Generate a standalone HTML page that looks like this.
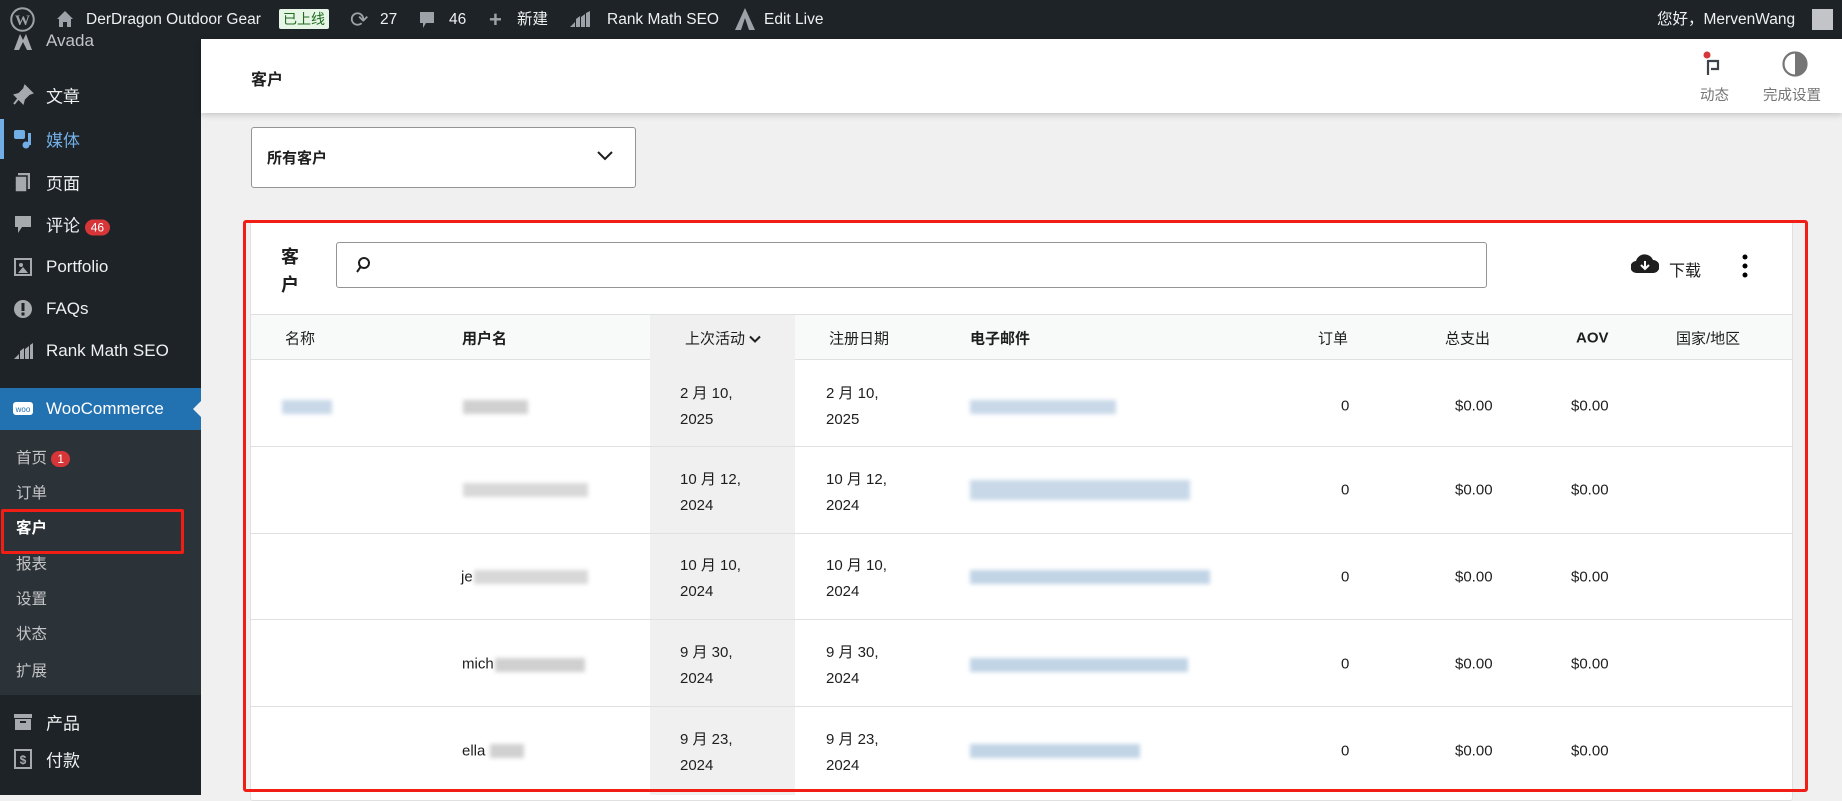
<!DOCTYPE html>
<html><head><meta charset="utf-8"><style>
*{box-sizing:border-box;margin:0;padding:0}
body{width:1842px;height:795px;overflow:hidden;background:#f0f0f1;font-family:"Liberation Sans","Noto Sans CJK SC",sans-serif;position:relative;color:#1e1e1e}
.a{position:absolute;white-space:nowrap}
#bar{left:0;top:0;width:1842px;height:39px;background:#1d2327;color:#f0f0f1;font-size:15.5px}
#bar span{line-height:39px;top:0}
#side{left:0;top:39px;width:201px;height:756px;background:#1d2327;color:#f0f0f1}
.mi{position:absolute;left:46px;font-size:17px;transform:translateY(-50%)}
.ic{position:absolute;left:12px;width:22px;height:22px;transform:translateY(-50%)}
.si{position:absolute;left:16px;font-size:15.5px;color:#c3c4c7;transform:translateY(-50%)}
.blur{position:absolute;height:14px;filter:blur(2px);transform:translateY(-50%)}
.th{position:absolute;top:338px;font-size:15px;transform:translateY(-50%);color:#1e1e1e}
.td{position:absolute;font-size:15px;transform:translateY(-50%);color:#1e1e1e}
.dt{position:absolute;font-size:15px;line-height:26px;color:#1e1e1e}
.hl{position:absolute;left:251px;width:1541px;height:1px;background:#e0e0e0}
</style></head><body>
<div id="bar" class="a">
 <svg class="a" style="left:10px;top:7px" width="25" height="25" viewBox="0 0 20 20"><circle cx="10" cy="10" r="9" fill="none" stroke="#9ca2a7" stroke-width="1.6"/><text x="10" y="14.5" font-size="12" font-family="Liberation Serif" font-weight="bold" text-anchor="middle" fill="#9ca2a7">W</text></svg>
 <svg class="a" style="left:56px;top:10px" width="18" height="18" viewBox="0 0 18 18"><path d="M9 1 L1 9 H3 V17 H7 V12 H11 V17 H15 V9 H17 Z" fill="#9ca2a7"/></svg>
 <span class="a" style="left:86px">DerDragon Outdoor Gear</span>
 <span class="a" style="left:279px;top:9px!important;line-height:20px!important;background:#e7f5e7;color:#1e6b1e;padding:0 4px;font-size:14px;border-radius:2px">已上线</span>
 <span class="a" style="left:350px;color:#9ca2a7;font-size:22px">⟳</span>
 <span class="a" style="left:380px">27</span>
 <svg class="a" style="left:418px;top:10px" width="18" height="20" viewBox="0 0 18 20"><path d="M2 2H16V13H8L5 18V13H2Z" fill="#9ca2a7"/></svg>
 <span class="a" style="left:449px">46</span>
 <span class="a" style="left:489px;color:#9ca2a7;font-size:22px;font-weight:bold">+</span>
 <span class="a" style="left:517px">新建</span>
 <svg class="a" style="left:569px;top:11px" width="22" height="18" viewBox="0 0 22 18"><path d="M1 16L6 11V16ZM7 16V8L11 5V16ZM12 16V6L16 3V16ZM17 16V2L21 0V16Z" fill="#9ca2a7"/></svg>
 <span class="a" style="left:607px">Rank Math SEO</span>
 <svg class="a" style="left:735px;top:8px" width="20" height="22" viewBox="0 0 20 22"><path d="M10 0L0 22H6L10 10L14 22H20Z" fill="#9ca2a7"/></svg>
 <span class="a" style="left:764px">Edit Live</span>
 <span class="a" style="left:1657px">您好，MervenWang</span>
 <div class="a" style="left:1812px;top:9px;width:21px;height:21px;background:#c3c4c7"></div>
</div>
<div id="side" class="a">
 <svg class="ic" style="top:2px" viewBox="0 0 22 22"><path d="M2 20L8 4L11 10L14 4L20 20H15L11 12L7 20Z" fill="#a7aaad"/></svg><span class="mi" style="top:2px;color:#c3c4c7">Avada</span>
 <svg class="ic" style="top:56px" viewBox="0 0 22 22"><path d="M13 2L20 9L17 10L12 15L11 19L3 11L7 10L12 5Z M6 15L2 20" fill="#a7aaad" stroke="#a7aaad" stroke-width="2"/></svg><span class="mi" style="top:56px">文章</span>
 <div class="a" style="left:0;top:80px;width:4px;height:40px;background:#72aee6"></div>
 <svg class="ic" style="top:100px" viewBox="0 0 22 22"><rect x="2" y="2" width="11" height="9" rx="2" fill="#72aee6"/><circle cx="14" cy="17" r="3.5" fill="#72aee6"/><rect x="16" y="5" width="3" height="12" fill="#72aee6"/></svg><span class="mi" style="top:100px;color:#72aee6">媒体</span>
 <svg class="ic" style="top:143px" viewBox="0 0 22 22"><rect x="6" y="2" width="12" height="16" fill="#a7aaad"/><rect x="3" y="5" width="12" height="16" fill="#a7aaad" stroke="#1d2327" stroke-width="1.5"/></svg><span class="mi" style="top:143px">页面</span>
 <svg class="ic" style="top:185px" viewBox="0 0 22 22"><path d="M3 3H19V14H10L6 20V14H3Z" fill="#a7aaad"/></svg><span class="mi" style="top:185px">评论 <span style="background:#d63638;color:#fff;font-size:12px;border-radius:9px;padding:1px 6px">46</span></span>
 <svg class="ic" style="top:228px" viewBox="0 0 22 22"><rect x="3" y="3" width="16" height="16" fill="none" stroke="#a7aaad" stroke-width="2"/><circle cx="9" cy="9" r="2" fill="#a7aaad"/><path d="M6 17L11 11L16 17Z" fill="#a7aaad"/></svg><span class="mi" style="top:228px">Portfolio</span>
 <svg class="ic" style="top:270px" viewBox="0 0 22 22"><circle cx="11" cy="11" r="9" fill="#a7aaad"/><rect x="9.5" y="5" width="3" height="8" fill="#1d2327"/><rect x="9.5" y="14.5" width="3" height="3" fill="#1d2327"/></svg><span class="mi" style="top:270px">FAQs</span>
 <svg class="ic" style="top:312px" viewBox="0 0 22 22"><path d="M2 19L7 14V19ZM8 19V11L12 8V19ZM13 19V9L17 6V19ZM18 19V5L21 3V19Z" fill="#a7aaad"/></svg><span class="mi" style="top:312px">Rank Math SEO</span>
 <div class="a" style="left:0;top:349px;width:201px;height:42px;background:#2271b1"></div>
 <svg class="ic" style="top:370px" viewBox="0 0 22 22"><rect x="1" y="4" width="20" height="13" rx="3" fill="#fff"/><text x="11" y="14" font-size="8" text-anchor="middle" fill="#2271b1" font-family="Liberation Sans">woo</text></svg><span class="mi" style="top:370px;color:#fff">WooCommerce</span>
 <div class="a" style="left:193px;top:362px;width:0;height:0;border-top:8px solid transparent;border-bottom:8px solid transparent;border-right:8px solid #f0f0f1"></div>
 <div class="a" style="left:0;top:391px;width:201px;height:265px;background:#2c3338"></div>
 <span class="si" style="top:418px">首页 <span style="background:#d63638;color:#fff;font-size:12px;border-radius:9px;padding:1px 6px">1</span></span>
 <span class="si" style="top:453px">订单</span>
 <span class="si" style="top:488px;color:#fff;font-weight:bold">客户</span>
 <div class="a" style="left:1px;top:470px;width:183px;height:45px;border:3px solid #f01e14;border-radius:2px"></div>
 <span class="si" style="top:524px">报表</span>
 <span class="si" style="top:559px">设置</span>
 <span class="si" style="top:594px">状态</span>
 <span class="si" style="top:631px">扩展</span>
 <svg class="ic" style="top:683px" viewBox="0 0 22 22"><rect x="2" y="3" width="18" height="4" fill="#a7aaad"/><rect x="3" y="8" width="16" height="11" fill="#a7aaad"/><rect x="8" y="10" width="6" height="2" fill="#1d2327"/></svg><span class="mi" style="top:683px">产品</span>
 <svg class="ic" style="top:720px" viewBox="0 0 22 22"><rect x="3" y="2" width="16" height="18" fill="none" stroke="#a7aaad" stroke-width="2"/><text x="11" y="16" font-size="12" font-weight="bold" text-anchor="middle" fill="#a7aaad" font-family="Liberation Sans">$</text></svg><span class="mi" style="top:720px">付款</span>
</div>
<div class="a" style="left:201px;top:39px;width:1641px;height:74px;background:#fff;box-shadow:0 2px 6px rgba(0,0,0,.18)"></div>
<span class="a" style="left:251px;top:66px;font-size:16px;font-weight:bold">客户</span>
<svg class="a" style="left:1703px;top:51px" width="22" height="26" viewBox="0 0 22 26"><circle cx="4" cy="4" r="3.5" fill="#d63638"/><path d="M5 9V24M5 10H15V18H8" fill="none" stroke="#3c434a" stroke-width="2.2"/></svg>
<span class="a" style="left:1700px;top:84px;font-size:14.5px;color:#757575">动态</span>
<svg class="a" style="left:1781px;top:50px" width="28" height="28" viewBox="0 0 28 28"><circle cx="14" cy="14" r="11.5" fill="none" stroke="#757575" stroke-width="2.2"/><path d="M14 3A11 11 0 0 1 14 25Z" fill="#757575"/></svg>
<span class="a" style="left:1763px;top:84px;font-size:14.5px;color:#757575">完成设置</span>
<div class="a" style="left:251px;top:127px;width:385px;height:61px;background:#fff;border:1px solid #949494;border-radius:3px"></div>
<span class="a" style="left:267px;top:147px;font-size:15px;font-weight:bold">所有客户</span>
<svg class="a" style="left:596px;top:150px" width="18" height="12" viewBox="0 0 18 12"><path d="M2 2L9 9L16 2" fill="none" stroke="#1e1e1e" stroke-width="2"/></svg>
<div class="a" style="left:250px;top:221px;width:1543px;height:580px;background:#fff;border:1px solid #e0e0e0;border-radius:3px"></div>
<span class="a" style="left:281px;top:243px;font-size:18px;font-weight:bold;line-height:28px;white-space:normal;width:22px">客户</span>
<div class="a" style="left:336px;top:242px;width:1151px;height:46px;border:1px solid #949494;border-radius:3px;background:#fff"></div>
<svg class="a" style="left:355px;top:256px" width="16" height="18" viewBox="0 0 16 18"><circle cx="9" cy="7" r="5" fill="none" stroke="#1e1e1e" stroke-width="2"/><path d="M5.5 11L2 16" stroke="#1e1e1e" stroke-width="2"/></svg>
<svg class="a" style="left:1631px;top:253px" width="28" height="22" viewBox="0 0 28 22"><path d="M6 20A6 6 0 0 1 5 8A9 9 0 0 1 22 7A6.5 6.5 0 0 1 22 20Z" fill="#1e1e1e"/><path d="M14 8V16M10 12L14 16L18 12" fill="none" stroke="#fff" stroke-width="2"/></svg>
<span class="a" style="left:1669px;top:257px;font-size:16px">下载</span>
<svg class="a" style="left:1741px;top:254px" width="8" height="26" viewBox="0 0 8 26"><circle cx="4" cy="3" r="2.5"/><circle cx="4" cy="12" r="2.5"/><circle cx="4" cy="21" r="2.5"/></svg>
<div class="a" style="left:251px;top:314px;width:1541px;height:46px;background:#f8f9f9;border-top:1px solid #e0e0e0;border-bottom:1px solid #e0e0e0"></div>
<div class="a" style="left:650px;top:315px;width:145px;height:480px;background:#f0f0f0"></div>
<span class="th" style="left:285px">名称</span>
<span class="th" style="left:462px;font-weight:bold">用户名</span>
<span class="th" style="left:685px">上次活动 <svg width="12" height="8" viewBox="0 0 12 8"><path d="M1 1L6 6L11 1" fill="none" stroke="#1e1e1e" stroke-width="2"/></svg></span>
<span class="th" style="left:829px">注册日期</span>
<span class="th" style="left:970px;font-weight:bold">电子邮件</span>
<span class="th" style="left:1318px">订单</span>
<span class="th" style="left:1445px">总支出</span>
<span class="th" style="left:1576px;font-weight:bold">AOV</span>
<span class="th" style="left:1676px">国家/地区</span>
<div class="hl" style="top:446px"></div><div class="hl" style="top:533px"></div><div class="hl" style="top:619px"></div><div class="hl" style="top:706px"></div>
<div class="blur" style="left:282px;top:407px;width:50px;background:#c8d8e8"></div>
<div class="blur" style="left:463px;top:407px;width:65px;background:#d0d0d0"></div>
<div class="dt" style="left:680px;top:381px">2 月 10,<br>2025</div><div class="dt" style="left:826px;top:381px">2 月 10,<br>2025</div>
<div class="blur" style="left:970px;top:407px;width:146px;background:#c8d8e8"></div>
<span class="td" style="left:1341px;top:406px">0</span><span class="td" style="left:1455px;top:406px">$0.00</span><span class="td" style="left:1571px;top:406px">$0.00</span>

<div class="blur" style="left:463px;top:490px;width:125px;background:#d8d8d8"></div>
<div class="dt" style="left:680px;top:467px">10 月 12,<br>2024</div><div class="dt" style="left:826px;top:467px">10 月 12,<br>2024</div>
<div class="blur" style="left:970px;top:490px;width:220px;height:20px;background:#c8d8e8"></div>
<span class="td" style="left:1341px;top:490px">0</span><span class="td" style="left:1455px;top:490px">$0.00</span><span class="td" style="left:1571px;top:490px">$0.00</span>

<span class="td" style="left:461px;top:577px">je</span><div class="blur" style="left:474px;top:577px;width:114px;background:#d8d8d8"></div>
<div class="dt" style="left:680px;top:553px">10 月 10,<br>2024</div><div class="dt" style="left:826px;top:553px">10 月 10,<br>2024</div>
<div class="blur" style="left:970px;top:577px;width:240px;background:#c0d4e6"></div>
<span class="td" style="left:1341px;top:577px">0</span><span class="td" style="left:1455px;top:577px">$0.00</span><span class="td" style="left:1571px;top:577px">$0.00</span>

<span class="td" style="left:462px;top:664px">mich</span><div class="blur" style="left:495px;top:665px;width:90px;background:#d0d0d0"></div>
<div class="dt" style="left:680px;top:640px">9 月 30,<br>2024</div><div class="dt" style="left:826px;top:640px">9 月 30,<br>2024</div>
<div class="blur" style="left:970px;top:665px;width:218px;background:#c0d4e6"></div>
<span class="td" style="left:1341px;top:664px">0</span><span class="td" style="left:1455px;top:664px">$0.00</span><span class="td" style="left:1571px;top:664px">$0.00</span>

<span class="td" style="left:462px;top:751px">ella</span><div class="blur" style="left:490px;top:751px;width:34px;background:#d0d0d0"></div>
<div class="dt" style="left:680px;top:727px">9 月 23,<br>2024</div><div class="dt" style="left:826px;top:727px">9 月 23,<br>2024</div>
<div class="blur" style="left:970px;top:751px;width:170px;background:#c0d4e6"></div>
<span class="td" style="left:1341px;top:751px">0</span><span class="td" style="left:1455px;top:751px">$0.00</span><span class="td" style="left:1571px;top:751px">$0.00</span>
<div class="a" style="left:243px;top:220px;width:1565px;height:572px;border:3px solid #f01e14;border-radius:3px"></div>
</body></html>
